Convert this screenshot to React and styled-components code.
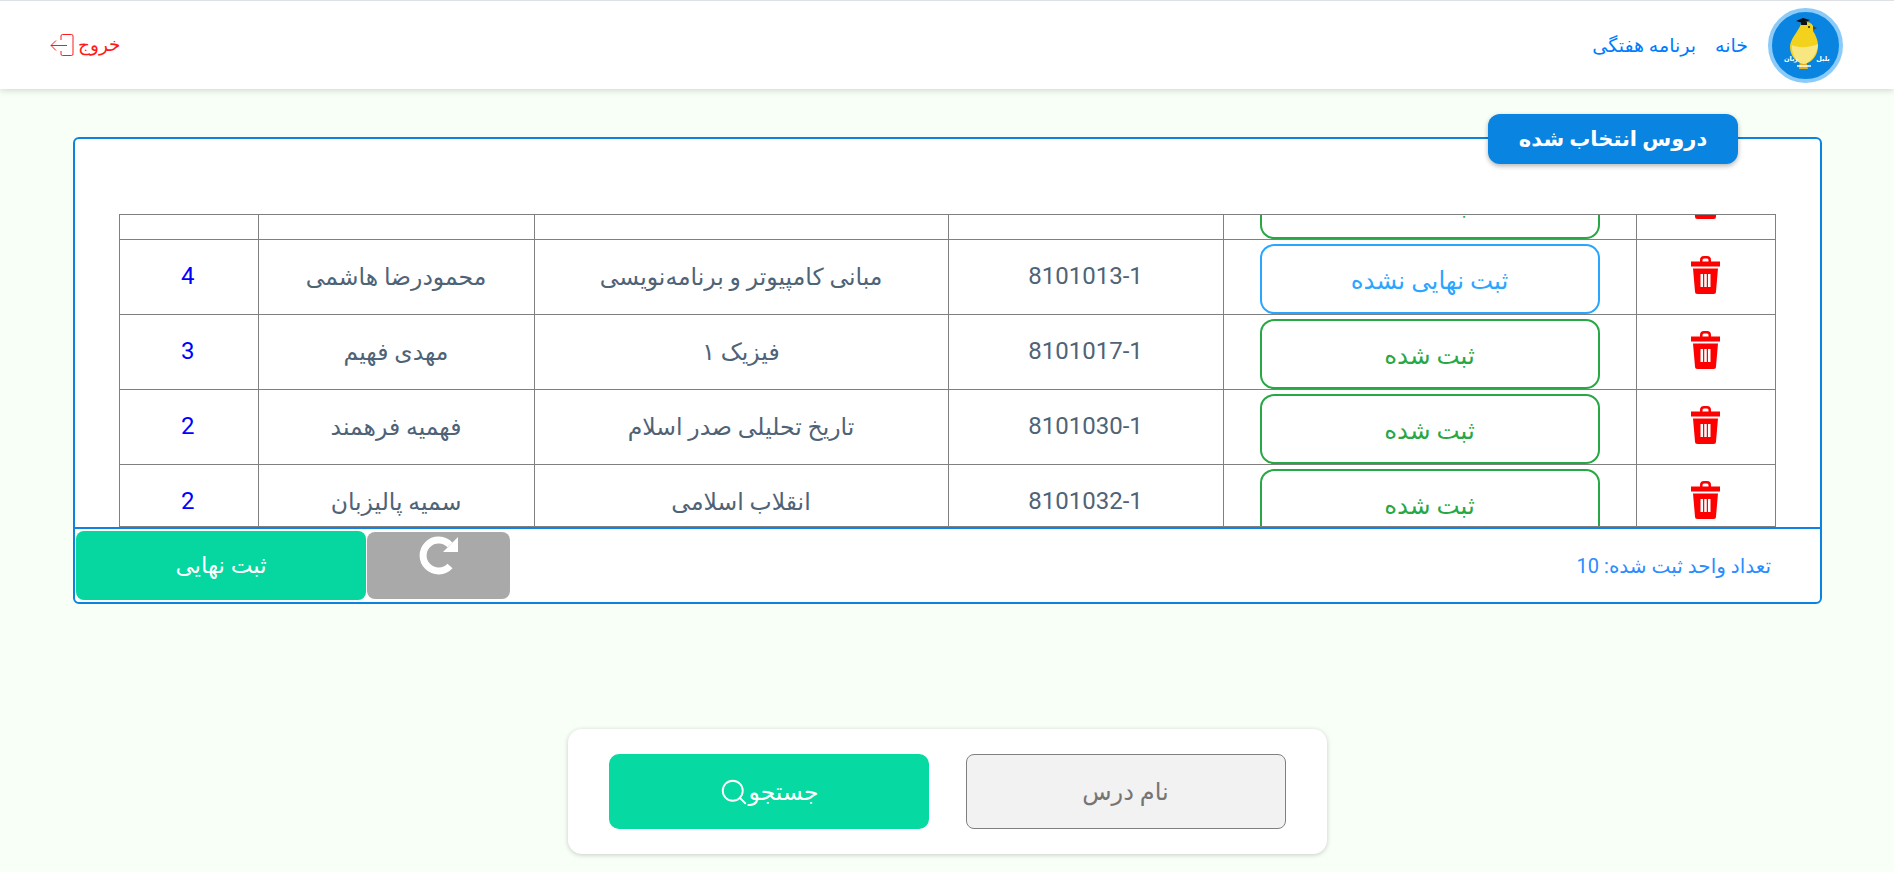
import React from "react";
import styled, { createGlobalStyle } from "styled-components";
import { Search } from "lucide-react";

const Global = createGlobalStyle`
  html, body { margin: 0; padding: 0; height: 100%; }
  body {
    background: #f7fff7;
    font-family: Roboto, "DejaVu Sans", sans-serif;
    overflow: hidden;
  }
`;

const Page = styled.div`
  direction: rtl;
  width: 1894px;
  height: 872px;
  display: flex;
  flex-direction: column;
`;

const Header = styled.header`
  height: 88px;
  flex: none;
  background: #fff;
  border-top: 1px solid #dee2e6;
  box-shadow: 0 2px 6px rgba(0, 0, 0, 0.14);
  display: flex;
  align-items: center;
  padding: 0 51px 0 50px;
`;

const LogoMark = styled.svg`
  width: 75px;
  height: 75px;
  flex: none;
`;

const Nav = styled.nav`
  display: flex;
  gap: 19px;
  margin-right: 20px;
  font-size: 19px;
`;

const NavLink = styled.a`
  color: #007bff;
  text-decoration: none;
`;

const Exit = styled.a`
  margin-right: auto;
  display: flex;
  align-items: center;
  gap: 4px;
  color: #ff1a1a;
  font-size: 18.500px;
`;

const Card = styled.section`
  position: relative;
  margin: 48px 72px 0 73px;
  height: 467px;
  box-sizing: border-box;
  border: 2px solid #0984e0;
  border-radius: 6px;
  background: #fff;
  display: flex;
  flex-direction: column;
`;

const Badge = styled.h2`
  position: absolute;
  top: -25px;
  right: 82px;
  margin: 0;
  width: 250px;
  height: 50px;
  border-radius: 12px;
  background: #0984e0;
  color: #fff;
  font-size: 21px;
  font-weight: 700;
  display: flex;
  align-items: center;
  justify-content: center;
  box-shadow: 0 2px 5px rgba(0, 0, 0, 0.3);
`;

const Scroller = styled.div`
  margin: 75px 44px 0 44px;
  height: 313px;
  box-sizing: border-box;
  border: 1px solid #808080;
  overflow: hidden;
  flex: none;
`;

const Table = styled.table`
  width: 100%;
  margin-top: -51px;
  border-collapse: collapse;
  table-layout: fixed;
`;

const Row = styled.tr`
  height: 75px;
`;

const Cell = styled.td`
  border: 1px solid #808080;
  padding: 0;
  text-align: center;
  color: #4f6377;
  font-size: 23.500px;
  vertical-align: middle;
  &:first-child { border-right: none; }
  &:last-child { border-left: none; }
`;

const Code = styled(Cell)`
  font-size: 24px;
  padding-bottom: 2px;
`;

const Units = styled(Cell)`
  color: #0000ff;
  font-size: 24px;
  padding-bottom: 2px;
`;

const StatusBox = styled.div`
  box-sizing: border-box;
  width: 340px;
  height: 70px;
  margin: 3px auto 0;
  border: 2px solid ${(p) => (p.$done ? "#28a745" : "#2ba6ff")};
  border-radius: 14px;
  color: ${(p) => (p.$done ? "#28a745" : "#2ba6ff")};
  font-size: 24.500px;
  display: flex;
  align-items: center;
  justify-content: center;
  padding-top: 4px;
`;

const TrashIcon = styled.svg`
  display: block;
  width: 29px;
  height: 38px;
  margin: 0 auto;
  position: relative;
  top: -2px;
`;

const Footer = styled.footer`
  flex: 1;
  border-top: 2px solid #0f82e6;
  display: flex;
  align-items: center;
  padding: 0 49px 0 1px;
`;

const Total = styled.span`
  color: #2b8cff;
  font-size: 20px;
  margin-left: auto;
`;

const Refresh = styled.button`
  width: 143px;
  height: 67px;
  border: none;
  border-radius: 8px;
  background: #a9a9a9;
  display: flex;
  justify-content: center;
  align-items: flex-start;
  padding: 4px 0 0;
  margin-left: 1px;
`;

const Submit = styled.button`
  width: 290px;
  height: 69px;
  border: none;
  border-radius: 8px;
  background: #06d6a0;
  color: #fff;
  font: inherit;
  font-size: 23px;
`;

const SearchBar = styled.div`
  align-self: center;
  margin-top: 125px;
  width: 759px;
  height: 125px;
  box-sizing: border-box;
  padding: 25px 41px;
  border-radius: 14px;
  background: #fff;
  box-shadow: 0 1px 5px rgba(0, 0, 0, 0.2);
  display: flex;
  justify-content: space-between;
`;

const NameInput = styled.input`
  box-sizing: border-box;
  width: 320px;
  height: 75px;
  border: 1px solid #808080;
  border-radius: 8px;
  background: #f2f2f2;
  color: #757575;
  font: inherit;
  font-size: 24px;
  text-align: center;
  &::placeholder { color: #757575; opacity: 1; }
`;

const SearchButton = styled.button`
  width: 320px;
  height: 75px;
  border: none;
  border-radius: 10px;
  background: #06d9a2;
  color: #fff;
  font: inherit;
  font-size: 23.500px;
  display: flex;
  align-items: center;
  justify-content: center;
  gap: 0;
`;

const Logo = () => (
  <LogoMark viewBox="0 0 75 75" aria-hidden="true">
    <circle cx="37.500" cy="37.500" r="35.500" fill="#0984e0" stroke="#8ccbf7" strokeWidth="4" />
    <path d="M32 52l-1 9h9l-2-9z" fill="#e0b020" />
    <path d="M33 16c3-3 10-3 12 2 1 2 0 4 0 5 3 5 5 9 5 15 0 9-6 17-14 18-8-1-14-9-14-17 0-8 8-15 11-23z" fill="#f2d21c" />
    <path d="M24 37c6 3 17 3 26-1 0 8-7 19-14 20-8-1-13-11-12-19z" fill="#f8e680" />
    <path d="M45 18l4 2-4 2z" fill="#444" />
    <circle cx="41" cy="19" r="1" fill="#222" />
    <path d="M28 13l7-3 7 2-7 3z" fill="#111" />
    <path d="M33 14h6v3h-6z" fill="#111" />
    <path d="M29 58h14" stroke="#fff" strokeWidth="1.500" />
    <text x="55" y="53" fontSize="6.500" fontWeight="700" fill="#fff" textAnchor="middle">بلبل</text>
    <text x="23" y="53" fontSize="6.500" fontWeight="700" fill="#fff" textAnchor="middle">زبان</text>
  </LogoMark>
);

const ExitIcon = () => (
  <svg width="24" height="22" viewBox="0 0 24 22" fill="none" stroke="currentColor" strokeWidth="1">
    <path d="M11 6V2a1.500 1.500 0 0 1 1.500-1.500h9A1.500 1.500 0 0 1 23 2v18a1.500 1.500 0 0 1-1.500 1.500h-9A1.500 1.500 0 0 1 11 20v-3" />
    <path d="M17 11.500H1M6 6.500l-5 5 5 5" />
  </svg>
);

const RefreshIcon = () => (
  <svg width="40" height="40" viewBox="0 0 40 40" aria-hidden="true">
    <path d="M31 30A15.500 15.500 0 1 1 31 9" fill="none" stroke="#fff" strokeWidth="7" />
    <path d="M39 1v15H24z" fill="#fff" />
  </svg>
);

const Trash = () => (
  <TrashIcon viewBox="0 0 29 38" aria-hidden="true">
    <path d="M9 6V4a4 4 0 0 1 4-4h3a4 4 0 0 1 4 4v2h-2.500V4a1.500 1.500 0 0 0-1.500-1.500h-3A1.500 1.500 0 0 0 11.500 4v2z" fill="#f00" />
    <rect x="0" y="5.500" width="29" height="5" fill="#f00" />
    <path fillRule="evenodd" fill="#f00" d="M2 12.500h25l-2 23a2.500 2.500 0 0 1-2.500 2.500h-16A2.500 2.500 0 0 1 4 35.500zM9.500 18v13h2.500V18zM13.250 18v13h2.500V18zM17 18v13h2.500V18z" />
  </TrashIcon>
);

const rows = [
  { done: true },
  { code: "8101013-1", name: "مبانی کامپیوتر و برنامه‌نویسی", teacher: "محمودرضا هاشمی", units: 4, done: false },
  { code: "8101017-1", name: "فیزیک ۱", teacher: "مهدی فهیم", units: 3, done: true },
  { code: "8101030-1", name: "تاریخ تحلیلی صدر اسلام", teacher: "فهمیه فرهمند", units: 2, done: true },
  { code: "8101032-1", name: "انقلاب اسلامی", teacher: "سمیه پالیزبان", units: 2, done: true },
];

export default function App() {
  return (
    <Page>
      <Global />
      <Header>
        <Logo />
        <Nav>
          <NavLink>خانه</NavLink>
          <NavLink>برنامه هفتگی</NavLink>
        </Nav>
        <Exit>
          خروج
          <ExitIcon />
        </Exit>
      </Header>
      <Card>
        <Badge>دروس انتخاب شده</Badge>
        <Scroller>
          <Table>
            <colgroup>
              <col width="139" />
              <col width="413" />
              <col width="275" />
              <col width="414" />
              <col width="276" />
              <col width="140" />
            </colgroup>
            <tbody>
              {rows.map((r, i) => (
                <Row key={i}>
                  <Cell><Trash /></Cell>
                  <Cell>
                    <StatusBox $done={r.done}>{r.done ? "ثبت شده" : "ثبت نهایی نشده"}</StatusBox>
                  </Cell>
                  <Code>{r.code}</Code>
                  <Cell>{r.name}</Cell>
                  <Cell>{r.teacher}</Cell>
                  <Units>{r.units}</Units>
                </Row>
              ))}
            </tbody>
          </Table>
        </Scroller>
        <Footer>
          <Total>تعداد واحد ثبت شده: 10</Total>
          <Refresh aria-label="refresh"><RefreshIcon /></Refresh>
          <Submit>ثبت نهایی</Submit>
        </Footer>
      </Card>
      <SearchBar>
        <NameInput placeholder="نام درس" />
        <SearchButton>
          جستجو
          <Search size={30} strokeWidth={1.500} />
        </SearchButton>
      </SearchBar>
    </Page>
  );
}
